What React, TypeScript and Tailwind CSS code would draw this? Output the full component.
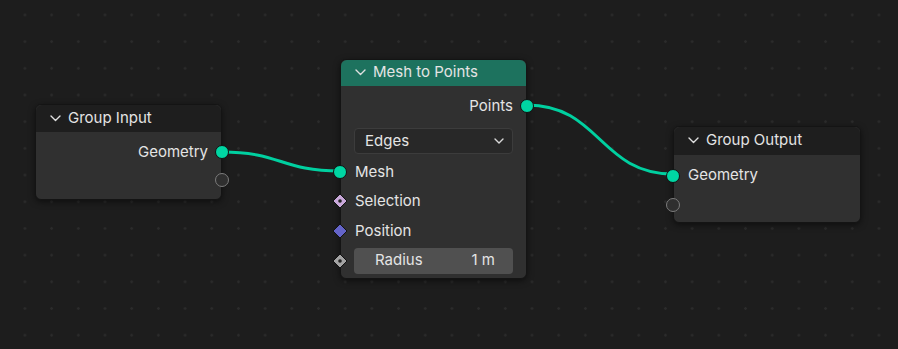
import React from "react";

// socket shapes used on the node edges
type SocketKind = "geo" | "empty" | "field" | "vector" | "value";

const Socket = ({ kind, side }: { kind: SocketKind; side: "left" | "right" }) => {
    const pos = side === "left" ? "left-[-8px]" : "right-[-8px]";
    if (kind === "geo") {
        return <div className={`absolute ${pos} top-1/2 -translate-y-1/2 w-[14px] h-[14px] rounded-full bg-[#00d6a3] border border-[#111]`} />;
    }
    if (kind === "empty") {
        return <div className={`absolute ${pos} top-1/2 -translate-y-1/2 w-[14px] h-[14px] rounded-full border-[1.5px] border-[#7c7c7c] bg-[#2f2f2f]`} />;
    }
    const fill = kind === "field" ? "#c9a8da" : kind === "vector" ? "#6464c8" : "#a3a3a3";
    const dot = kind !== "vector";
    return (
        <svg className={`absolute ${side === "left" ? "left-[-9px]" : "right-[-9px]"} top-1/2 -translate-y-1/2`} width="16" height="16" viewBox="0 0 16 16">
            <path d="M8 1 L15 8 L8 15 L1 8 Z" fill={fill} stroke="#111" strokeWidth="1" />
            {dot && <circle cx="8" cy="8" r="1.8" fill="#222" />}
        </svg>
    );
};

const Chevron = () => (
    <svg width="11" height="7" viewBox="0 0 11 7" className="shrink-0">
        <path d="M1 1 L5.5 5.5 L10 1" fill="none" stroke="#e0e0e0" strokeWidth="1.4" strokeLinecap="round" strokeLinejoin="round" />
    </svg>
);

const Header = ({ title, color, h }: { title: string; color: string; h: string }) => (
    <div className={`flex items-center gap-[7px] pl-[14px] pb-[1px] rounded-t-[6px] ${color} ${h}`}>
        <Chevron />
        <span>{title}</span>
    </div>
);

const Row = ({ label, h, align, socket }: { label?: string; h: string; align: "left" | "right"; socket: { kind: SocketKind; side: "left" | "right" } }) => (
    <div className={`relative flex items-center ${h} ${align === "right" ? "justify-end pr-[13px]" : "pl-[14px]"}`}>
        {label && <span>{label}</span>}
        <Socket kind={socket.kind} side={socket.side} />
    </div>
);

const link = (x1: number, y1: number, x2: number, y2: number) => {
    const d = (x2 - x1) * 0.5;
    return `M${x1} ${y1} C${x1 + d} ${y1} ${x2 - d} ${y2} ${x2} ${y2}`;
};

const App = () => {
    return (
        <div
            className="relative w-[898px] h-[349px] overflow-hidden bg-[#1d1d1d] bg-[radial-gradient(circle,#2b2b2b_1px,transparent_1.6px)] bg-[size:26.7px_26.7px] bg-[position:11.6px_1.6px] text-[15px] text-[#e4e4e4]"
            style={{ fontFamily: "Inter, 'Noto Sans', sans-serif" }}
        >
            {/* wires between nodes */}
            <svg className="absolute inset-0" width="898" height="349">
                <path d={link(222, 152, 340, 171)} fill="none" stroke="#00d0a0" strokeWidth="3" />
                <path d={link(527, 105, 673, 174)} fill="none" stroke="#00d0a0" strokeWidth="3" />
            </svg>

            {/* Group Input */}
            <div className="absolute left-[35px] top-[104px] w-[187px] h-[96px] rounded-[6px] bg-[#303030] border border-[#141414] shadow-[0_2px_6px_rgba(0,0,0,0.5)]">
                <Header title="Group Input" color="bg-[#1e1e1e]" h="h-[27px]" />
                <div className="pt-[6px]">
                    <Row label="Geometry" h="h-[28px]" align="right" socket={{ kind: "geo", side: "right" }} />
                    <Row h="h-[28px]" align="right" socket={{ kind: "empty", side: "right" }} />
                </div>
            </div>

            {/* Mesh to Points */}
            <div className="absolute left-[340px] top-[59px] w-[187px] h-[220px] rounded-[6px] bg-[#303030] border border-[#141414] shadow-[0_2px_6px_rgba(0,0,0,0.5)]">
                <Header title="Mesh to Points" color="bg-[#1d725e]" h="h-[26px]" />
                <div className="pt-[6px]">
                    <Row label="Points" h="h-[28px]" align="right" socket={{ kind: "geo", side: "right" }} />
                    <div className="mx-[13px] mt-[8px] h-[26px] rounded-[4px] bg-[#282828] border border-[#3c3c3c] flex items-center justify-between pl-[10px] pr-[8px]">
                        <span>Edges</span>
                        <svg width="10" height="6" viewBox="0 0 10 6">
                            <path d="M1 1 L5 5 L9 1" fill="none" stroke="#d8d8d8" strokeWidth="1.4" strokeLinecap="round" strokeLinejoin="round" />
                        </svg>
                    </div>
                    <div className="mt-[3px]">
                        <Row label="Mesh" h="h-[29.5px]" align="left" socket={{ kind: "geo", side: "left" }} />
                        <Row label="Selection" h="h-[29.5px]" align="left" socket={{ kind: "field", side: "left" }} />
                        <Row label="Position" h="h-[29.5px]" align="left" socket={{ kind: "vector", side: "left" }} />
                    </div>
                    <div className="relative mt-[2px] h-[26px]">
                        <div className="mx-[13px] h-full rounded-[4px] bg-[#505050] flex items-center justify-between pl-[21px] pr-[18px]">
                            <span>Radius</span>
                            <span>1 m</span>
                        </div>
                        <Socket kind="value" side="left" />
                    </div>
                </div>
            </div>

            {/* Group Output */}
            <div className="absolute left-[673px] top-[126px] w-[188px] h-[97px] rounded-[6px] bg-[#303030] border border-[#141414] shadow-[0_2px_6px_rgba(0,0,0,0.5)]">
                <Header title="Group Output" color="bg-[#1e1e1e]" h="h-[28px]" />
                <div className="pt-[6px]">
                    <Row label="Geometry" h="h-[29px]" align="left" socket={{ kind: "geo", side: "left" }} />
                    <Row h="h-[29px]" align="left" socket={{ kind: "empty", side: "left" }} />
                </div>
            </div>
        </div>
    );
};

export default App;
